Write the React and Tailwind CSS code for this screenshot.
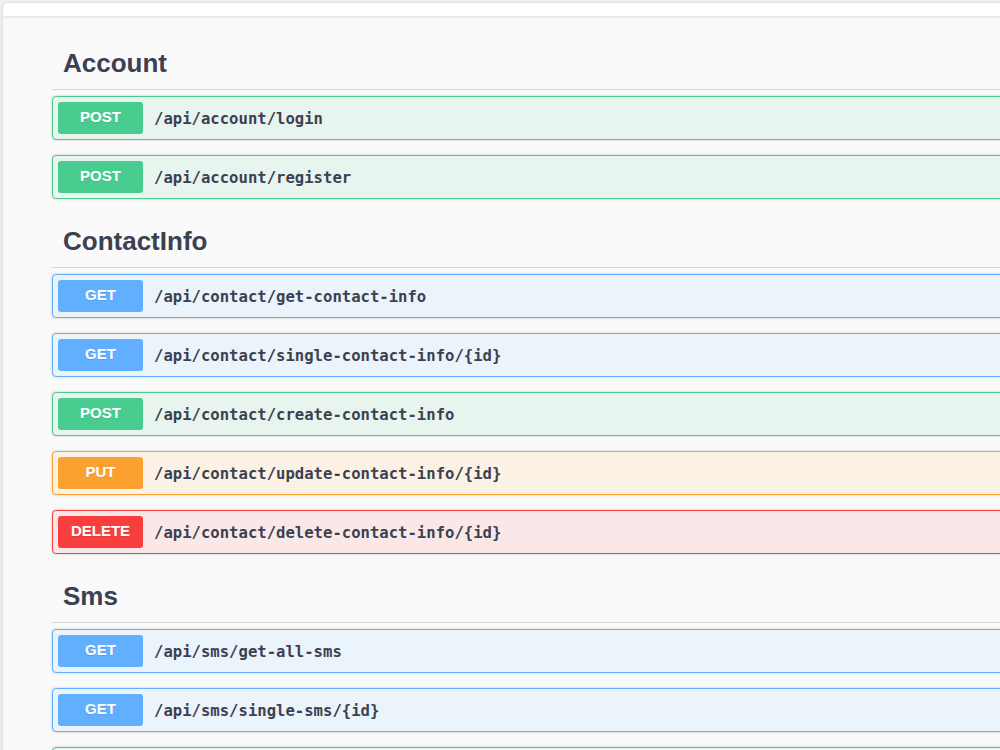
const METHODS = {
  POST: { badge: "bg-[#49cc90]", block: "border-[#49cc90] bg-[#e8f5ef]" },
  GET: { badge: "bg-[#61affe]", block: "border-[#61affe] bg-[#ebf3fb]" },
  PUT: { badge: "bg-[#fca130]", block: "border-[#fca130] bg-[#fcf1e5]" },
  DELETE: { badge: "bg-[#f93e3e]", block: "border-[#f93e3e] bg-[#fae8e8]" },
};

const sections = [
  {
    name: "Account",
    ops: [
      ["POST", "/api/account/login"],
      ["POST", "/api/account/register"],
    ],
  },
  {
    name: "ContactInfo",
    ops: [
      ["GET", "/api/contact/get-contact-info"],
      ["GET", "/api/contact/single-contact-info/{id}"],
      ["POST", "/api/contact/create-contact-info"],
      ["PUT", "/api/contact/update-contact-info/{id}"],
      ["DELETE", "/api/contact/delete-contact-info/{id}"],
    ],
  },
  {
    name: "Sms",
    ops: [
      ["GET", "/api/sms/get-all-sms"],
      ["GET", "/api/sms/single-sms/{id}"],
      ["POST", "/api/sms/send-sms"],
    ],
  },
];

function Operation({ method, path }) {
  const m = METHODS[method];
  return (
    <div
      className={`flex items-center mb-[15px] h-[44px] px-[5px] border rounded-[4px] shadow-[0_0_3px_rgba(0,0,0,0.19)] ${m.block}`}
    >
      <span
        className={`flex items-center justify-center w-[85px] h-[32px] pb-[1px] rounded-[3px] text-white text-[15px] font-bold [text-shadow:0_1px_0_rgba(0,0,0,0.1)] font-['Liberation_Sans',Arial,sans-serif] ${m.badge}`}
      >
        {method}
      </span>
      <span className="pl-[11px] mt-[4px] text-[15.6px] font-bold text-[#3b4151] font-['DejaVu_Sans_Mono',monospace]">
        {path}
      </span>
    </div>
  );
}

export default function App() {
  return (
    <div className="h-[750px] w-[1000px] overflow-hidden bg-[#efefef] pt-[3px] pl-[3px]">
      <div className="w-[1200px] h-[800px] rounded-tl-[5px] bg-[#fafafa] shadow-[0_0_3px_rgba(0,0,0,0.15)] overflow-hidden">
        {/* top bar */}
        <div className="h-[13px] bg-white shadow-[0_1px_3px_rgba(0,0,0,0.12)]" />

        <div className="pl-[49px] pt-[20px]">
          {sections.map((s) => (
            <div key={s.name}>
              <h3 className="flex items-center h-[54px] mb-[6px] pl-[11px] pt-[1px] border-b border-[#d6d7d9] text-[26px] font-bold text-[#3b4151] font-['Liberation_Sans',Arial,sans-serif]">
                {s.name}
              </h3>
              {s.ops.map(([method, path]) => (
                <Operation key={path} method={method} path={path} />
              ))}
            </div>
          ))}
        </div>
      </div>
    </div>
  );
}
